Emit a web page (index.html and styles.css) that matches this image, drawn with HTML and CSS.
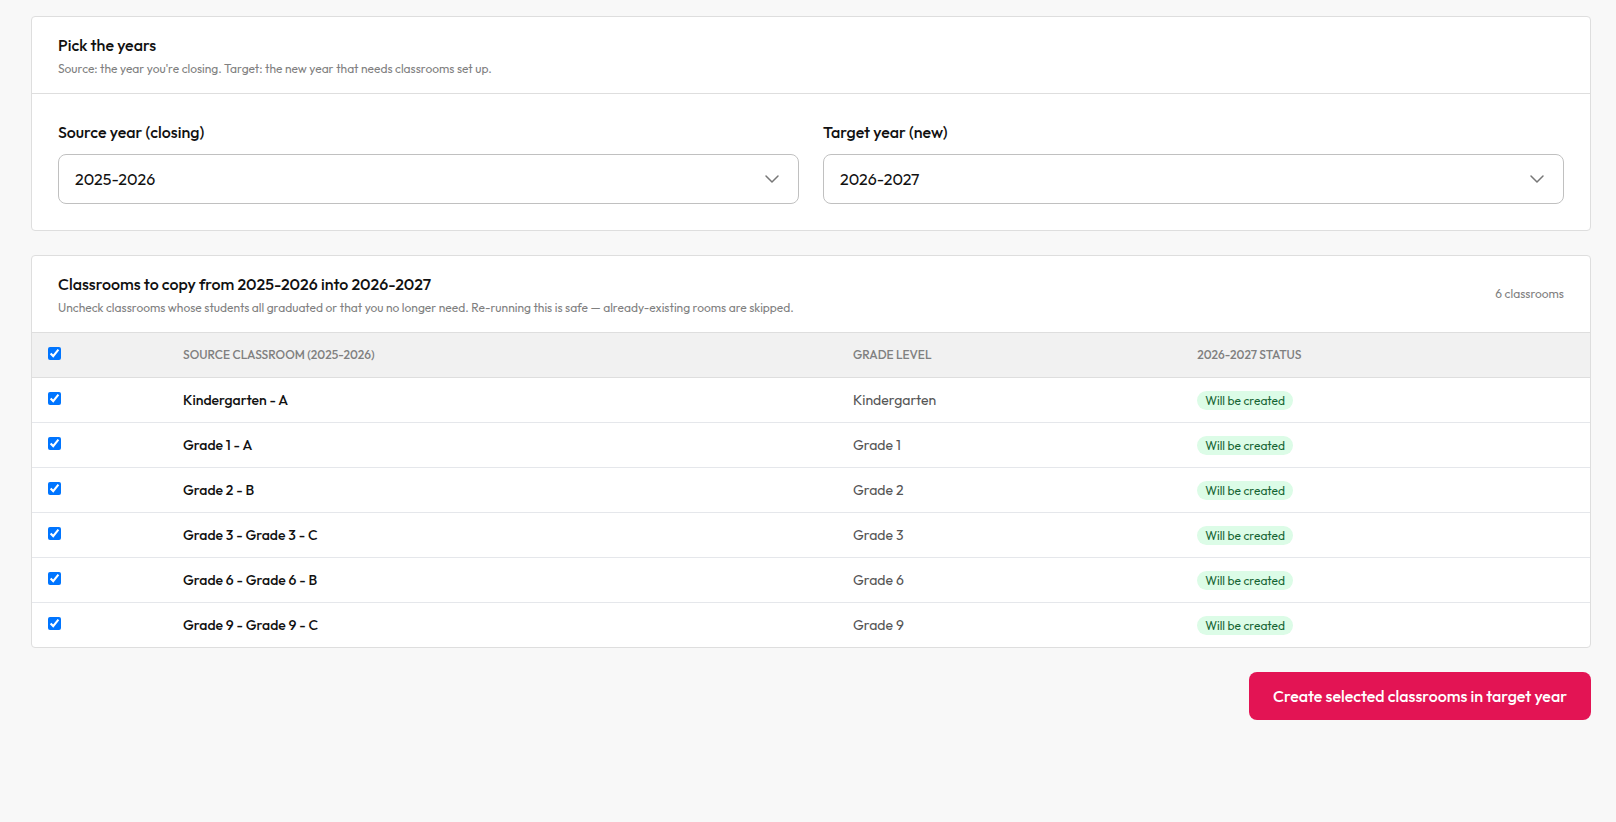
FILE: index.html
```html
<!DOCTYPE html>
<html lang="en">
<head>
    <meta charset="UTF-8">
    <meta name="viewport" content="width=device-width, initial-scale=1.0">
    <title>Classroom rollover</title>
    <link rel="stylesheet" href="styles.css">
</head>
<body>
    <form class="page">
        <section class="card">
            <div class="card-header">
                <div>
                    <h2>Pick the years</h2>
                    <p>Source: the year you're closing. Target: the new year that needs classrooms set up.</p>
                </div>
            </div>
            <div class="card-body">
                <div class="field">
                    <label for="source">Source year (closing)</label>
                    <select id="source">
                        <option>2025-2026</option>
                    </select>
                </div>
                <div class="field">
                    <label for="target">Target year (new)</label>
                    <select id="target">
                        <option>2026-2027</option>
                    </select>
                </div>
            </div>
        </section>

        <section class="card">
            <div class="card-header">
                <div>
                    <h2>Classrooms to copy from 2025-2026 into 2026-2027</h2>
                    <p>Uncheck classrooms whose students all graduated or that you no longer need. Re-running this is safe — already-existing rooms are skipped.</p>
                </div>
                <span class="count">6 classrooms</span>
            </div>
            <table>
                <thead>
                    <tr>
                        <th class="col-check"><input type="checkbox" id="all" aria-label="Select all" checked></th>
                        <th class="col-room">Source classroom (2025-2026)</th>
                        <th class="col-grade">Grade level</th>
                        <th>2026-2027 status</th>
                    </tr>
                </thead>
                <tbody>
                    <tr>
                        <td><input type="checkbox" id="room1" checked></td>
                        <td><label class="room" for="room1">Kindergarten - A</label></td>
                        <td>Kindergarten</td>
                        <td><span class="badge">Will be created</span></td>
                    </tr>
                    <tr>
                        <td><input type="checkbox" id="room2" checked></td>
                        <td><label class="room" for="room2">Grade 1 - A</label></td>
                        <td>Grade 1</td>
                        <td><span class="badge">Will be created</span></td>
                    </tr>
                    <tr>
                        <td><input type="checkbox" id="room3" checked></td>
                        <td><label class="room" for="room3">Grade 2 - B</label></td>
                        <td>Grade 2</td>
                        <td><span class="badge">Will be created</span></td>
                    </tr>
                    <tr>
                        <td><input type="checkbox" id="room4" checked></td>
                        <td><label class="room" for="room4">Grade 3 - Grade 3 - C</label></td>
                        <td>Grade 3</td>
                        <td><span class="badge">Will be created</span></td>
                    </tr>
                    <tr>
                        <td><input type="checkbox" id="room5" checked></td>
                        <td><label class="room" for="room5">Grade 6 - Grade 6 - B</label></td>
                        <td>Grade 6</td>
                        <td><span class="badge">Will be created</span></td>
                    </tr>
                    <tr>
                        <td><input type="checkbox" id="room6" checked></td>
                        <td><label class="room" for="room6">Grade 9 - Grade 9 - C</label></td>
                        <td>Grade 9</td>
                        <td><span class="badge">Will be created</span></td>
                    </tr>
                </tbody>
            </table>
        </section>

        <div class="actions">
            <button type="submit">Create selected classrooms in target year</button>
        </div>
    </form>
</body>
</html>
```
FILE: styles.css
```css
* {
    box-sizing: border-box;
}

body {
    margin: 0;
    background-color: #f8f8f8;
    color: #111;
    font-family: Outfit, Lato, sans-serif;
    font-size: 16px;
    line-height: 24px;
}

.page {
    display: flex;
    flex-direction: column;
    gap: 24px;
    padding: 16px 25px 24px 31px;
}

.card {
    background-color: #fff;
    border: 1px solid #dedede;
    border-radius: 4px;
    overflow: hidden;
}

.card-header {
    display: flex;
    align-items: center;
    justify-content: space-between;
    gap: 24px;
    padding: 16px 26px;
    border-bottom: 1px solid #dedede;
}

h2 {
    margin: 0 0 4px;
    font-size: 16px;
    font-weight: 500;
}

.card-header p,
.count {
    margin: 0;
    font-size: 12px;
    line-height: 16px;
    color: #808080;
}

.count {
    white-space: nowrap;
}

/* year pickers */
.card-body {
    display: grid;
    grid-template-columns: 1fr 1fr;
    gap: 24px;
    padding: 26px;
}

.field label {
    display: block;
    margin-bottom: 10px;
    font-weight: 500;
}

select {
    display: block;
    width: 100%;
    height: 50px;
    padding: 0 48px 0 16px;
    border: 1px solid #c0c0c0;
    border-radius: 8px;
    appearance: none;
    background: #fff url("data:image/svg+xml,%3Csvg xmlns='http://www.w3.org/2000/svg' viewBox='0 0 16 16' fill='none' stroke='%23777' stroke-width='1.5' stroke-linecap='round' stroke-linejoin='round'%3E%3Cpath d='M2 5l6 6 6-6'/%3E%3C/svg%3E") no-repeat right 18px center;
    background-size: 16px 16px;
    color: #111;
    font-family: inherit;
    font-size: 16px;
}

/* classrooms table */
table {
    width: 100%;
    border-collapse: collapse;
    table-layout: fixed;
    font-size: 14px;
    line-height: 20px;
}

th,
td {
    padding: 12px 16px;
    text-align: left;
}

th {
    background-color: #f1f1f1;
    color: #808080;
    font-size: 12px;
    font-weight: 500;
    text-transform: uppercase;
}

td {
    color: #555;
}

thead tr {
    border-bottom: 1px solid #dedede;
}

tbody tr + tr {
    border-top: 1px solid #e5e7eb;
}

.col-check {
    width: 135px;
}

.col-room {
    width: 43%;
}

.col-grade {
    width: 22.1%;
}

input[type="checkbox"] {
    display: block;
    width: 13px;
    height: 13px;
    margin: 2px 0 5px;
    accent-color: #0075ff;
}

.room {
    color: #111;
    font-weight: 500;
}

.badge {
    padding: 2px 8px;
    border-radius: 10px;
    background-color: #dcfce7;
    color: #166534;
    font-size: 12px;
    line-height: 16px;
}

.actions {
    display: flex;
    justify-content: flex-end;
}

button {
    padding: 12px 24px;
    border: none;
    border-radius: 8px;
    background-color: #e31454;
    color: #fff;
    font-family: inherit;
    font-size: 16px;
    font-weight: 500;
    line-height: 24px;
    cursor: pointer;
}
```
